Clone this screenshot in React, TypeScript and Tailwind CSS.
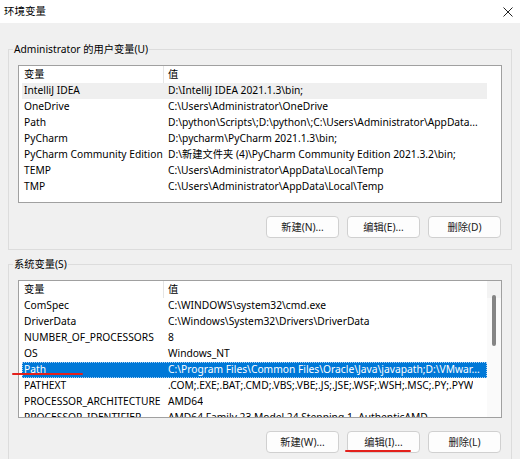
import React from "react";

type Row = [string, string];

const userVars: Row[] = [
  ["IntelliJ IDEA", "D:\\IntelliJ IDEA 2021.1.3\\bin;"],
  ["OneDrive", "C:\\Users\\Administrator\\OneDrive"],
  ["Path", "D:\\python\\Scripts\\;D:\\python\\;C:\\Users\\Administrator\\AppData..."],
  ["PyCharm", "D:\\pycharm\\PyCharm 2021.1.3\\bin;"],
  ["PyCharm Community Edition", "D:\\新建文件夹 (4)\\PyCharm Community Edition 2021.3.2\\bin;"],
  ["TEMP", "C:\\Users\\Administrator\\AppData\\Local\\Temp"],
  ["TMP", "C:\\Users\\Administrator\\AppData\\Local\\Temp"],
];

const sysVars: Row[] = [
  ["ComSpec", "C:\\WINDOWS\\system32\\cmd.exe"],
  ["DriverData", "C:\\Windows\\System32\\Drivers\\DriverData"],
  ["NUMBER_OF_PROCESSORS", "8"],
  ["OS", "Windows_NT"],
  ["Path", "C:\\Program Files\\Common Files\\Oracle\\Java\\javapath;D:\\VMwar..."],
  ["PATHEXT", ".COM;.EXE;.BAT;.CMD;.VBS;.VBE;.JS;.JSE;.WSF;.WSH;.MSC;.PY;.PYW"],
  ["PROCESSOR_ARCHITECTURE", "AMD64"],
  ["PROCESSOR_IDENTIFIER", "AMD64 Family 23 Model 24 Stepping 1, AuthenticAMD"],
];

interface VarListProps {
  rows: Row[];
  hoverIndex?: number;
  selectedIndex?: number;
  scrollbar?: boolean;
}

const VarList = ({ rows, hoverIndex, selectedIndex, scrollbar }: VarListProps) => {
  return (
    <div className="h-[138px] w-[484px] border border-[#a0a0a0] bg-white overflow-hidden flex">
      <div className="flex-1 min-w-0 pl-[3px]">
        <div className="h-[17px] flex items-center">
          <div className="w-[141px] pl-[2px]">变量</div>
          <div className="w-px h-full bg-[#e5e5e5]" />
          <div className="pl-[4px]">值</div>
        </div>
        {rows.map(([name, value], i) => {
          const selected = i === selectedIndex;
          const hover = i === hoverIndex;
          return (
            <div
              key={name + i}
              className={
                selected
                  ? "h-[16px] flex items-center bg-[#0078d7] text-white outline outline-dotted outline-[#a9d0f2] -outline-offset-1"
                  : hover
                  ? "h-[16px] flex items-center bg-[#efefef]"
                  : "h-[16px] flex items-center"
              }
            >
              <div className="w-[142px] pl-[2px] whitespace-nowrap overflow-hidden shrink-0">
                {name}
              </div>
              <div className="pl-[4px] whitespace-nowrap overflow-hidden">{value}</div>
            </div>
          );
        })}
      </div>
      <div className="w-[14px] shrink-0 flex flex-col">
        {scrollbar && (
          <>
            <div className="h-[17px] bg-[#f3f3f3]" />
            <div className="flex-1 bg-[#fafafa] flex justify-center">
              <div className="mt-[-3px] w-[4px] h-[51px] rounded-full bg-[#858585]" />
            </div>
          </>
        )}
      </div>
    </div>
  );
};

const WinButton = ({ label }: { label: string }) => (
  <button className="h-[22px] w-[73px] rounded-[4px] border border-[#d0d0d0] bg-[#fdfdfd] text-[#1a1a1a] leading-[20px]">
    {label}
  </button>
);

interface GroupProps {
  title: string;
  children: React.ReactNode;
  className?: string;
}

const GroupBox = ({ title, children, className }: GroupProps) => (
  <div className={"relative mx-[8px] border border-[#dcdcdc] px-[9px] pt-[15px] pb-[11px] " + (className ?? "")}>
    <div className="absolute left-[4px] top-[-9px] px-[1px] bg-[#f0f0f0] leading-[16px]">{title}</div>
    {children}
  </div>
);

export default function App() {
  return (
    <div className="relative w-[520px] h-[459px] overflow-hidden bg-[#f0f0f0] text-[10.25px] text-black font-['Noto_Sans','Noto_Sans_CJK_SC',sans-serif]">
      <div className="h-[23px] bg-white flex items-center justify-between pl-[4px] pr-[7px]">
        <span className="text-[10.5px]">环境变量</span>
        <svg width="10" height="10" viewBox="0 0 10 10">
          <path d="M0.5 0.5 L9.5 9.5 M9.5 0.5 L0.5 9.5" stroke="#222" strokeWidth="1" />
        </svg>
      </div>

      <GroupBox title="Administrator 的用户变量(U)" className="mt-[26px]">
        <VarList rows={userVars} hoverIndex={0} />
        <div className="mt-[13px] flex justify-end gap-[8px] pr-[1px]">
          <WinButton label="新建(N)..." />
          <WinButton label="编辑(E)..." />
          <WinButton label="删除(D)" />
        </div>
      </GroupBox>

      <GroupBox title="系统变量(S)" className="mt-[14px]">
        <VarList rows={sysVars} selectedIndex={4} scrollbar />
        <div className="mt-[13px] flex justify-end gap-[8px] pr-[1px]">
          <WinButton label="新建(W)..." />
          <WinButton label="编辑(I)..." />
          <WinButton label="删除(L)" />
        </div>
      </GroupBox>

      {/* red annotation marks */}
      <div className="absolute left-[12px] top-[373px] w-[71px] h-[2px] bg-[#e3211c] rounded-full" />
      <div className="absolute left-[345px] top-[450px] w-[66px] h-[2px] bg-[#e3211c] rounded-full" />
    </div>
  );
}
